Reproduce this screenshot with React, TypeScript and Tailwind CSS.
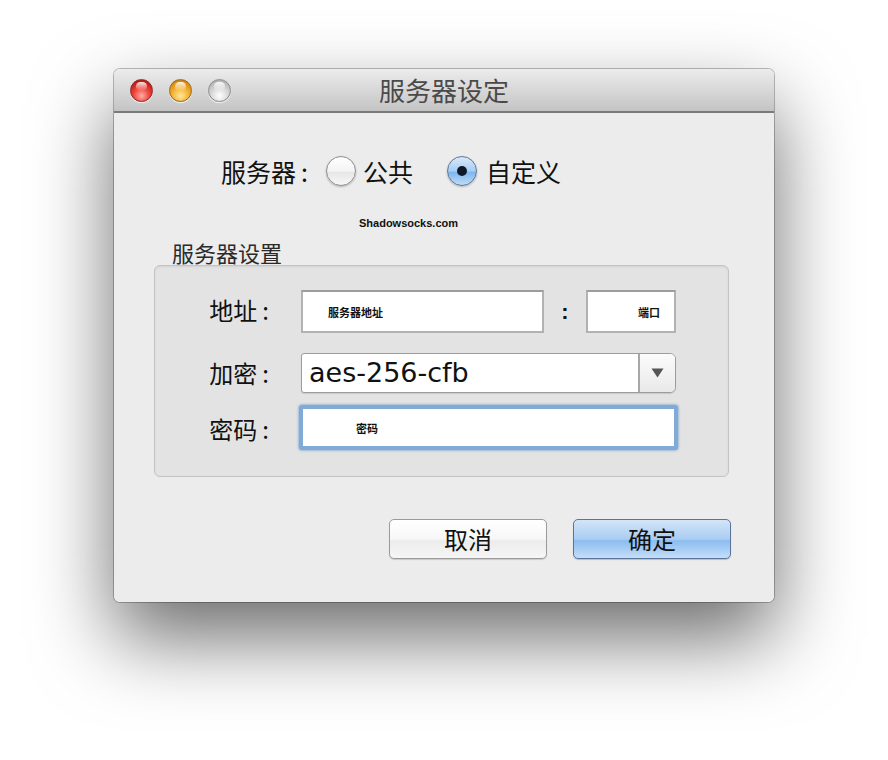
import * as React from "react"

const cjk = "font-['Noto_Sans_CJK_SC','Noto_Sans',sans-serif]"

function Light({ tone }: { tone: "red" | "yellow" | "gray" }) {
  const fill =
    tone === "red"
      ? "bg-[radial-gradient(circle_at_50%_75%,#ffb0a8_0%,#f0483f_40%,#c51a16_75%,#9c0f0c_100%)] border-[#8e2a26]"
      : tone === "yellow"
        ? "bg-[radial-gradient(circle_at_50%_75%,#ffe7a0_0%,#f6b83a_40%,#d98a10_75%,#a86508_100%)] border-[#9a6a1c]"
        : "bg-[radial-gradient(circle_at_50%_75%,#ffffff_0%,#dcdcdc_40%,#b8b8b8_75%,#9a9a9a_100%)] border-[#8f8f8f]"
  return (
    <div className={`relative h-[23px] w-[23px] rounded-full border ${fill} shadow-[0_1px_1px_rgba(255,255,255,0.7)]`}>
      <div className="absolute left-[5px] top-[2px] h-[9px] w-[11px] rounded-full bg-gradient-to-b from-white/90 to-white/0" />
    </div>
  )
}

function Radio({ checked }: { checked?: boolean }) {
  return (
    <div
      className={`flex h-[30px] w-[30px] items-center justify-center rounded-full border shadow-[0_1px_2px_rgba(0,0,0,0.25)] ${
        checked
          ? "border-[#5d7898] bg-[linear-gradient(180deg,#d9e9fa_0%,#a8cdf3_50%,#7fb6ee_55%,#bfdcf8_100%)]"
          : "border-[#8d8d8d] bg-[linear-gradient(180deg,#ffffff_0%,#f4f4f4_50%,#e6e6e6_55%,#f8f8f8_100%)]"
      }`}
    >
      {checked && <div className="h-[10px] w-[10px] rounded-full bg-[#0e1a2a]" />}
    </div>
  )
}

function Label({ text, className = "" }: { text: string; className?: string }) {
  return (
    <div className={`flex justify-end ${className}`}>
      <span>{text}</span>
      <span className="ml-[5px]">:</span>
    </div>
  )
}

export default function App() {
  return (
    <div className="min-h-[760px] bg-white pl-[114px] pt-[69px]">
      <div className="w-[660px] overflow-hidden rounded-[6px] shadow-[0_36px_80px_rgba(0,0,0,0.58),0_0_0_1px_rgba(0,0,0,0.25)]">
        {/* title bar */}
        <div className="grid h-[44px] grid-cols-[1fr_auto_1fr] items-center border-b-2 border-[#7a7a7a] bg-gradient-to-b from-[#ececec] to-[#c4c4c4]">
          <div className="flex items-center gap-[16px] pl-[16px]">
            <Light tone="red" />
            <Light tone="yellow" />
            <Light tone="gray" />
          </div>
          <div className={`${cjk} text-[26px] leading-[30px] text-[#4a4a4a]`}>服务器设定</div>
          <div />
        </div>

        {/* body */}
        <div className={`${cjk} h-[489px] bg-[#ececec] pt-[42px]`}>
          <div className="flex h-[32px] items-center pl-[107px] text-[25px] leading-[32px] text-[#111]">
            <span>服务器</span>
            <span className="ml-[5px]">:</span>
            <div className="ml-[18px]">
              <Radio />
            </div>
            <span className="ml-[7px]">公共</span>
            <div className="ml-[34px]">
              <Radio checked />
            </div>
            <span className="ml-[9px]">自定义</span>
          </div>

          <div className="mt-[29px] pl-[245px] font-['Liberation_Sans',sans-serif] text-[11px] font-bold leading-[14px] text-[#111]">
            Shadowsocks.com
          </div>

          <div className="mt-[9px] pl-[58px] text-[22px] leading-[26px] text-[#2a2a2a]">服务器设置</div>

          {/* group box */}
          <div className="ml-[40px] h-[212px] w-[575px] rounded-[6px] border border-[#c4c4c4] bg-[#e3e3e3] pt-[24px] shadow-[inset_0_1px_2px_rgba(0,0,0,0.08)]">
            <div className="grid grid-cols-[114px_auto] items-center gap-x-[32px] text-[24px] leading-[30px] text-[#111]">
              <Label text="地址" className="-mt-[3px]" />
              <div className="flex h-[43px] items-center">
                <div className="flex h-[43px] w-[243px] items-center border-2 border-[#b2b2b2] border-t-[#9d9d9d] bg-white pl-[25px] text-[11px] font-bold leading-[14px]">
                  服务器地址
                </div>
                <div className="w-[42px] text-center font-['Liberation_Sans',sans-serif] text-[22px] font-bold">:</div>
                <div className="flex h-[43px] w-[90px] items-center border-2 border-[#b2b2b2] border-t-[#9d9d9d] bg-white pl-[50px] text-[11px] font-bold leading-[14px]">
                  端口
                </div>
              </div>

              <Label text="加密" className="mt-[20px]" />
              <div className="mt-[20px] flex h-[40px] w-[375px] overflow-hidden rounded-[6px] rounded-l-[3px] border border-[#9c9c9c] bg-white shadow-[0_1px_1px_rgba(0,0,0,0.12)]">
                <div className="flex flex-1 items-center pl-[7px] font-['DejaVu_Sans',sans-serif] text-[27px] leading-[30px] text-[#111]">
                  aes-256-cfb
                </div>
                <div className="flex w-[37px] items-center justify-center border-l-2 border-[#a8a8a8] bg-gradient-to-b from-[#fbfbfb] to-[#e9e9e9]">
                  <svg width="13" height="10" viewBox="0 0 13 10">
                    <path d="M0.5 0.5 L12.5 0.5 L6.5 9.5 Z" fill="#555" />
                  </svg>
                </div>
              </div>

              <Label text="密码" className="mt-[14px]" />
              <div className="-ml-[2px] mt-[12px] flex h-[45px] w-[379px] items-center rounded-[3px] border-[4px] border-[#80aad8] bg-white pl-[53px] text-[11px] font-bold leading-[14px] shadow-[0_0_3px_rgba(60,120,190,0.8)]">
                密码
              </div>
            </div>
          </div>

          {/* buttons */}
          <div className="mt-[42px] flex justify-end gap-[26px] pr-[43px] text-[24px] leading-[30px] text-[#111]">
            <button className="flex h-[40px] w-[158px] items-center justify-center rounded-[5px] border border-[#9a9a9a] bg-[linear-gradient(180deg,#ffffff_0%,#f7f7f7_50%,#ececec_55%,#f6f6f6_100%)] shadow-[0_1px_1px_rgba(0,0,0,0.15)]">
              取消
            </button>
            <button className="flex h-[40px] w-[158px] items-center justify-center rounded-[5px] border border-[#5b7499] bg-[linear-gradient(180deg,#d3e5f8_0%,#aacdf2_50%,#8cbdf0_55%,#c4def8_100%)] shadow-[0_1px_1px_rgba(0,0,0,0.2)]">
              确定
            </button>
          </div>
        </div>
      </div>
    </div>
  )
}
